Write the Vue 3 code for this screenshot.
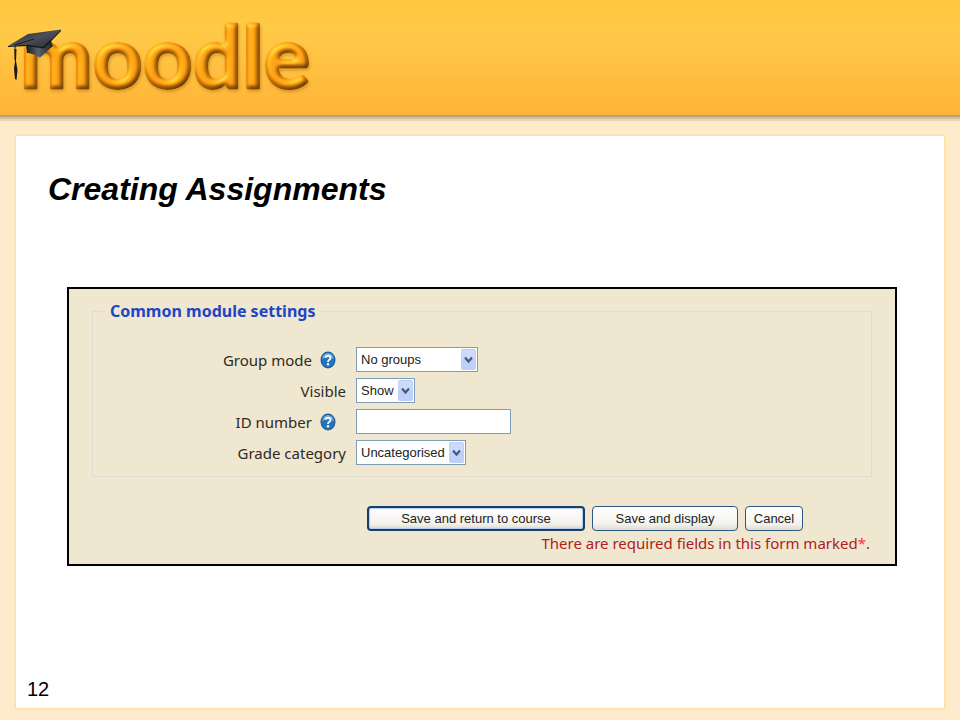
<script setup>
import { ref } from 'vue'

const rows = ref([
  { id: 'groupmode', label: 'Group mode', help: true, options: ['No groups', 'Separate groups', 'Visible groups'], value: 'No groups', size: 'wide' },
  { id: 'visible', label: 'Visible', options: ['Show', 'Hide'], value: 'Show', size: 'small' },
  { id: 'idnumber', label: 'ID number', help: true, value: '' },
  { id: 'gradecat', label: 'Grade category', options: ['Uncategorised'], value: 'Uncategorised', size: 'medium' },
])
</script>

<template>
  <div class="page">
    <header class="banner">
      <svg class="logo" width="320" height="115" viewBox="0 0 320 115" role="img" aria-label="moodle">
        <defs>
          <filter id="bevel" x="-5%" y="-10%" width="110%" height="120%" color-interpolation-filters="sRGB">
            <feGaussianBlur in="SourceAlpha" stdDeviation="2.6" result="soft" />
            <feDiffuseLighting in="soft" surfaceScale="5" diffuseConstant="1.15" lighting-color="#ffffff" result="shade">
              <feDistantLight azimuth="235" elevation="58" />
            </feDiffuseLighting>
            <feComposite in="SourceGraphic" in2="shade" operator="arithmetic" k1="0.6" k2="0.4" k3="0" k4="0" result="body" />
            <feSpecularLighting in="soft" surfaceScale="3" specularConstant="0.8" specularExponent="14" lighting-color="#ffd890" result="shine">
              <feDistantLight azimuth="235" elevation="40" />
            </feSpecularLighting>
            <feComposite in="body" in2="shine" operator="arithmetic" k1="0" k2="1" k3="0.4" k4="0" result="lit" />
            <feComposite in="lit" in2="SourceAlpha" operator="in" result="letters" />
            <feDropShadow in="letters" dx="1" dy="2" stdDeviation="1.5" flood-color="#b46a08" flood-opacity="0.5" />
          </filter>
          <linearGradient id="board" x1="0" y1="0" x2="1" y2="1">
            <stop offset="0" stop-color="#22252b" />
            <stop offset="0.5" stop-color="#4b4f58" />
            <stop offset="1" stop-color="#25272d" />
          </linearGradient>
          <linearGradient id="crown" x1="0" y1="0" x2="1" y2="0">
            <stop offset="0" stop-color="#17191d" />
            <stop offset="0.45" stop-color="#59606b" />
            <stop offset="1" stop-color="#202226" />
          </linearGradient>
        </defs>
        <text class="wordmark" x="20" y="88" filter="url(#bevel)">moodle</text>
        <path d="M26 45 L27 53 Q32 53 40 57.500 L53 46 L50 38 Z" fill="url(#crown)" />
        <path d="M8 46 L28 34 L61 29.500 L43 47 L27 44.500 Z" fill="url(#board)" />
        <path d="M43 47 L61 29.500 L61 31 L44 48.500 L27 46 L8 47 L8 46 L27 44.500 Z" fill="#15171a" />
        <path d="M34 39 L15 45 L15 60" fill="none" stroke="#191b1e" stroke-width="1" />
        <path d="M14.500 49 L16.500 49 L16 61 L17.500 70 L16.500 80 L15 79 L14 69 L15 61 Z" fill="#1b1a18" />
      </svg>
    </header>

    <main class="sheet">
      <h1 class="title">Creating Assignments</h1>

      <form class="panel" @submit.prevent>
        <fieldset class="group">
          <legend>Common module settings</legend>
          <div class="rows">
            <div v-for="row in rows" :key="row.id" class="row">
              <div class="caption">
                <label :for="row.id">{{ row.label }}</label>
                <button v-if="row.help" type="button" class="help" :aria-label="'Help with ' + row.label">
                  <svg width="16" height="18" viewBox="0 0 16 18" aria-hidden="true">
                    <ellipse cx="8" cy="9" rx="7.500" ry="8.500" fill="#1c5d9e" />
                    <ellipse cx="8" cy="9" rx="6.500" ry="7.500" fill="#2473b8" />
                    <path d="M2 8 Q3 2 8 2 Q13 2 14 8 Q8 5 2 8 Z" fill="#6fa5d3" />
                    <path d="M5.500 6.700 Q5.700 4.700 8 4.700 Q10.500 4.700 10.500 6.900 Q10.500 8.300 9 9 Q8 9.600 8 11" fill="none" stroke="#fff" stroke-width="1.800" />
                    <circle cx="8" cy="13.200" r="1.200" fill="#fff" />
                  </svg>
                </button>
              </div>
              <div v-if="row.options" class="picker" :class="row.size">
                <select :id="row.id" v-model="row.value">
                  <option v-for="option in row.options" :key="option">{{ option }}</option>
                </select>
                <svg class="arrow" width="15" height="21" viewBox="0 0 15 21" aria-hidden="true">
                  <rect width="15" height="21" rx="2" fill="#bfd0f8" />
                  <rect x="1" y="1" width="13" height="9" rx="1" fill="#cddafb" />
                  <path d="M4 8.500 L7.500 12.500 L11 8.500" fill="none" stroke="#435a86" stroke-width="2.200" />
                </svg>
              </div>
              <input v-else :id="row.id" v-model="row.value" class="field" type="text" />
            </div>
          </div>
        </fieldset>

        <div class="actions">
          <button type="submit" class="btn primary">Save and return to course</button>
          <button type="button" class="btn display">Save and display</button>
          <button type="button" class="btn cancel">Cancel</button>
        </div>
        <p class="required">There are required fields in this form marked<span class="star">*</span>.</p>
      </form>

      <footer class="number">12</footer>
    </main>
  </div>
</template>

<style>
body {
  margin: 0;
}
</style>

<style scoped>
.page {
  box-sizing: border-box;
  min-height: 100vh;
  display: flex;
  flex-direction: column;
  background: #fdebcb;
  font-family: "Liberation Sans", Arial, sans-serif;
  color: #000;
}
.banner {
  height: 115px;
  background: linear-gradient(#ffc63f 0, #ffca48 30px, #ffb438 100%);
  border-bottom: 2px solid #bd9d87;
  box-shadow: 0 2px 0 #d2bfa0, 0 4px 1px #e8d8b4;
}
.logo {
  display: block;
}
.wordmark {
  font-family: Lato, sans-serif;
  font-weight: 700;
  font-size: 87px;
  fill: #fa960c;
  stroke: #fa960c;
  stroke-width: 3px;
  stroke-linejoin: round;
}
.sheet {
  flex: 1;
  display: flex;
  flex-direction: column;
  margin: 18px 15px 11px;
  padding: 0 47px 0 51px;
  background: #fefefe;
  border: 1px solid #ffdfa6;
  box-shadow: 0 0 2px #ffdc9c;
}
.title {
  margin: 35px 0 0 -19px;
  font-size: 32px;
  line-height: 36px;
  font-style: italic;
  font-weight: 700;
}
.panel {
  margin-top: 80px;
  padding: 10px 23px 9px;
  background: #efe7d0;
  border: 2px solid #000;
  font-family: "Noto Sans", sans-serif;
  font-size: 15px;
}
.group {
  margin: 0;
  padding: 0 0 11px;
  border: 1px solid #dfdcd2;
  min-width: 0;
}
legend {
  margin-left: 12px;
  padding: 0 5px;
  font-size: 16px;
  line-height: 24px;
  font-weight: 700;
  color: #1d45c4;
}
.rows {
  display: grid;
  gap: 6px;
  padding-top: 24px;
}
.row {
  display: grid;
  grid-template-columns: minmax(0, 253px) 1fr;
  gap: 10px;
  align-items: center;
}
.caption {
  display: flex;
  justify-content: flex-end;
  align-items: center;
  gap: 8px;
  line-height: 24px;
  color: #2f2a24;
}
.help {
  display: flex;
  margin-right: 10px;
  padding: 0;
  border: 0;
  background: none;
}
.picker {
  display: grid;
  align-items: center;
}
.wide {
  width: 122px;
}
.small {
  width: 59px;
}
.medium {
  width: 110px;
}
.picker select,
.arrow {
  grid-area: 1 / 1;
}
.arrow {
  justify-self: end;
  margin-right: 2px;
  pointer-events: none;
}
select,
.field {
  box-sizing: border-box;
  width: 100%;
  height: 25px;
  margin: 0;
  padding: 0 4px;
  border: 1px solid #7f9db9;
  border-radius: 0;
  appearance: none;
  background: #fff;
  color: #222;
  font-family: "Liberation Sans", Arial, sans-serif;
  font-size: 13px;
}
.field {
  width: 155px;
}
.actions {
  display: flex;
  justify-content: flex-end;
  gap: 7px;
  margin: 29px 69px 0 0;
}
.btn {
  box-sizing: border-box;
  height: 25px;
  padding: 0;
  border: 1px solid #30587e;
  border-radius: 4px;
  background: linear-gradient(#fff, #f3f2ec 75%, #dedbd0);
  color: #222;
  font-family: "Liberation Sans", Arial, sans-serif;
  font-size: 13px;
}
.primary {
  width: 218px;
  border: 2px solid #173f6c;
  box-shadow: inset 0 0 1px 1px #b4c9e8;
}
.display {
  width: 146px;
}
.cancel {
  width: 58px;
}
.required {
  margin: 0 2px 0 0;
  line-height: 24px;
  text-align: right;
  color: #b02020;
}
.star {
  color: #ff3040;
}
.number {
  margin: auto 0 7px -40px;
  font-size: 20px;
  line-height: 24px;
}
</style>
